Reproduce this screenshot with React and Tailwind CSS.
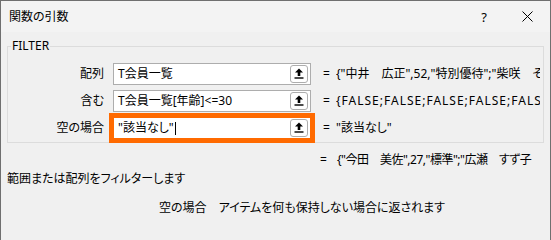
import React from "react";

const UpIcon = () => (
  <svg width="10" height="11" viewBox="0 0 10 11" className="block">
    <path d="M5 0.5 L9 4.5 H6.3 V8 H3.7 V4.5 H1 Z" fill="#000" />
    <rect x="0.5" y="9.3" width="9" height="1.4" fill="#000" />
  </svg>
);

const RefButton = () => (
  <div className="w-[18px] h-[18px] border border-[#adadad] rounded-[3px] bg-white flex items-center justify-center mr-[2px]">
    <UpIcon />
  </div>
);

const Row = ({ label, value, result, focused, resultClass = "" }) => (
  <div className="flex items-center h-[27px] min-w-0">
    <div className="w-[97px] text-right pr-[1px] shrink-0">{label}</div>
    <div
      className={
        "ml-[8px] w-[198px] h-[22px] shrink-0 bg-white border flex items-center justify-between pl-[4px] " +
        (focused
          ? "border-[#adadad] outline-[5px] outline-solid outline-[#ff6a00] outline-offset-[-1px]"
          : "border-[#adadad]")
      }
    >
      <span className="whitespace-nowrap">
        {value}
        {focused && <span className="inline-block w-[1px] h-[13px] bg-black align-middle ml-[1px]" />}
      </span>
      <RefButton />
    </div>
    <div className="ml-[12px] w-[13px] shrink-0">=</div>
    <div className={"flex-1 min-w-0 overflow-hidden whitespace-nowrap " + resultClass}>{result}</div>
  </div>
);

export default function App() {
  return (
    <div className="w-[551px] h-[240px] bg-[#f0f0f0] border-x border-t border-[#6f6f6f] flex flex-col text-[12px] leading-[16px] text-black font-['Noto_Sans','Noto_Sans_CJK_JP',sans-serif] [font-feature-settings:'palt'] overflow-hidden">
      <div className="h-[31px] bg-[#f3f3f3] flex items-center shrink-0">
        <div className="pl-[8px] flex-1">関数の引数</div>
        <div className="w-[14px] text-[13px] text-center mr-[31px]">?</div>
        <svg width="11" height="11" viewBox="0 0 11 11" className="mr-[17px]">
          <path d="M0.5 0.5 L10.5 10.5 M10.5 0.5 L0.5 10.5" stroke="#000" strokeWidth="1" />
        </svg>
      </div>
      <div className="px-[6px] pt-[6px] shrink-0">
        <fieldset className="min-w-0 border border-[#dcdcdc] pl-0 pr-[3px] pb-0 pt-[6px] h-[105px]">
          <legend className="ml-[3px] px-[1px]">FILTER</legend>
          <Row
            label="配列"
            value="T会員一覧"
            result={'{"中井　広正",52,"特別優待";"柴咲　そのか",24,"標準";"今田　美佐",27,"標準"}'}
          />
          <Row
            label="含む"
            value="T会員一覧[年齢]<=30"
            result="{FALSE;FALSE;FALSE;FALSE;FALSE;TRUE;FALSE}"
            resultClass="tracking-[1px]"
          />
          <Row label="空の場合" value={'"該当なし"'} result={'"該当なし"'} focused />
        </fieldset>
      </div>
      <div className="flex h-[19px] items-center mt-[7px] pl-[319px] shrink-0">
        <div className="w-[17px]">=</div>
        <div className="whitespace-nowrap tracking-[-0.5px]">{'{"今田　美佐",27,"標準";"広瀬　すず子'}</div>
      </div>
      <div className="pl-[6px] mt-[1px] h-[18px] flex items-center shrink-0">範囲または配列をフィルターします</div>
      <div className="pl-[158px] mt-[11px] h-[18px] flex items-center whitespace-nowrap shrink-0">空の場合　アイテムを何も保持しない場合に返されます</div>
    </div>
  );
}
